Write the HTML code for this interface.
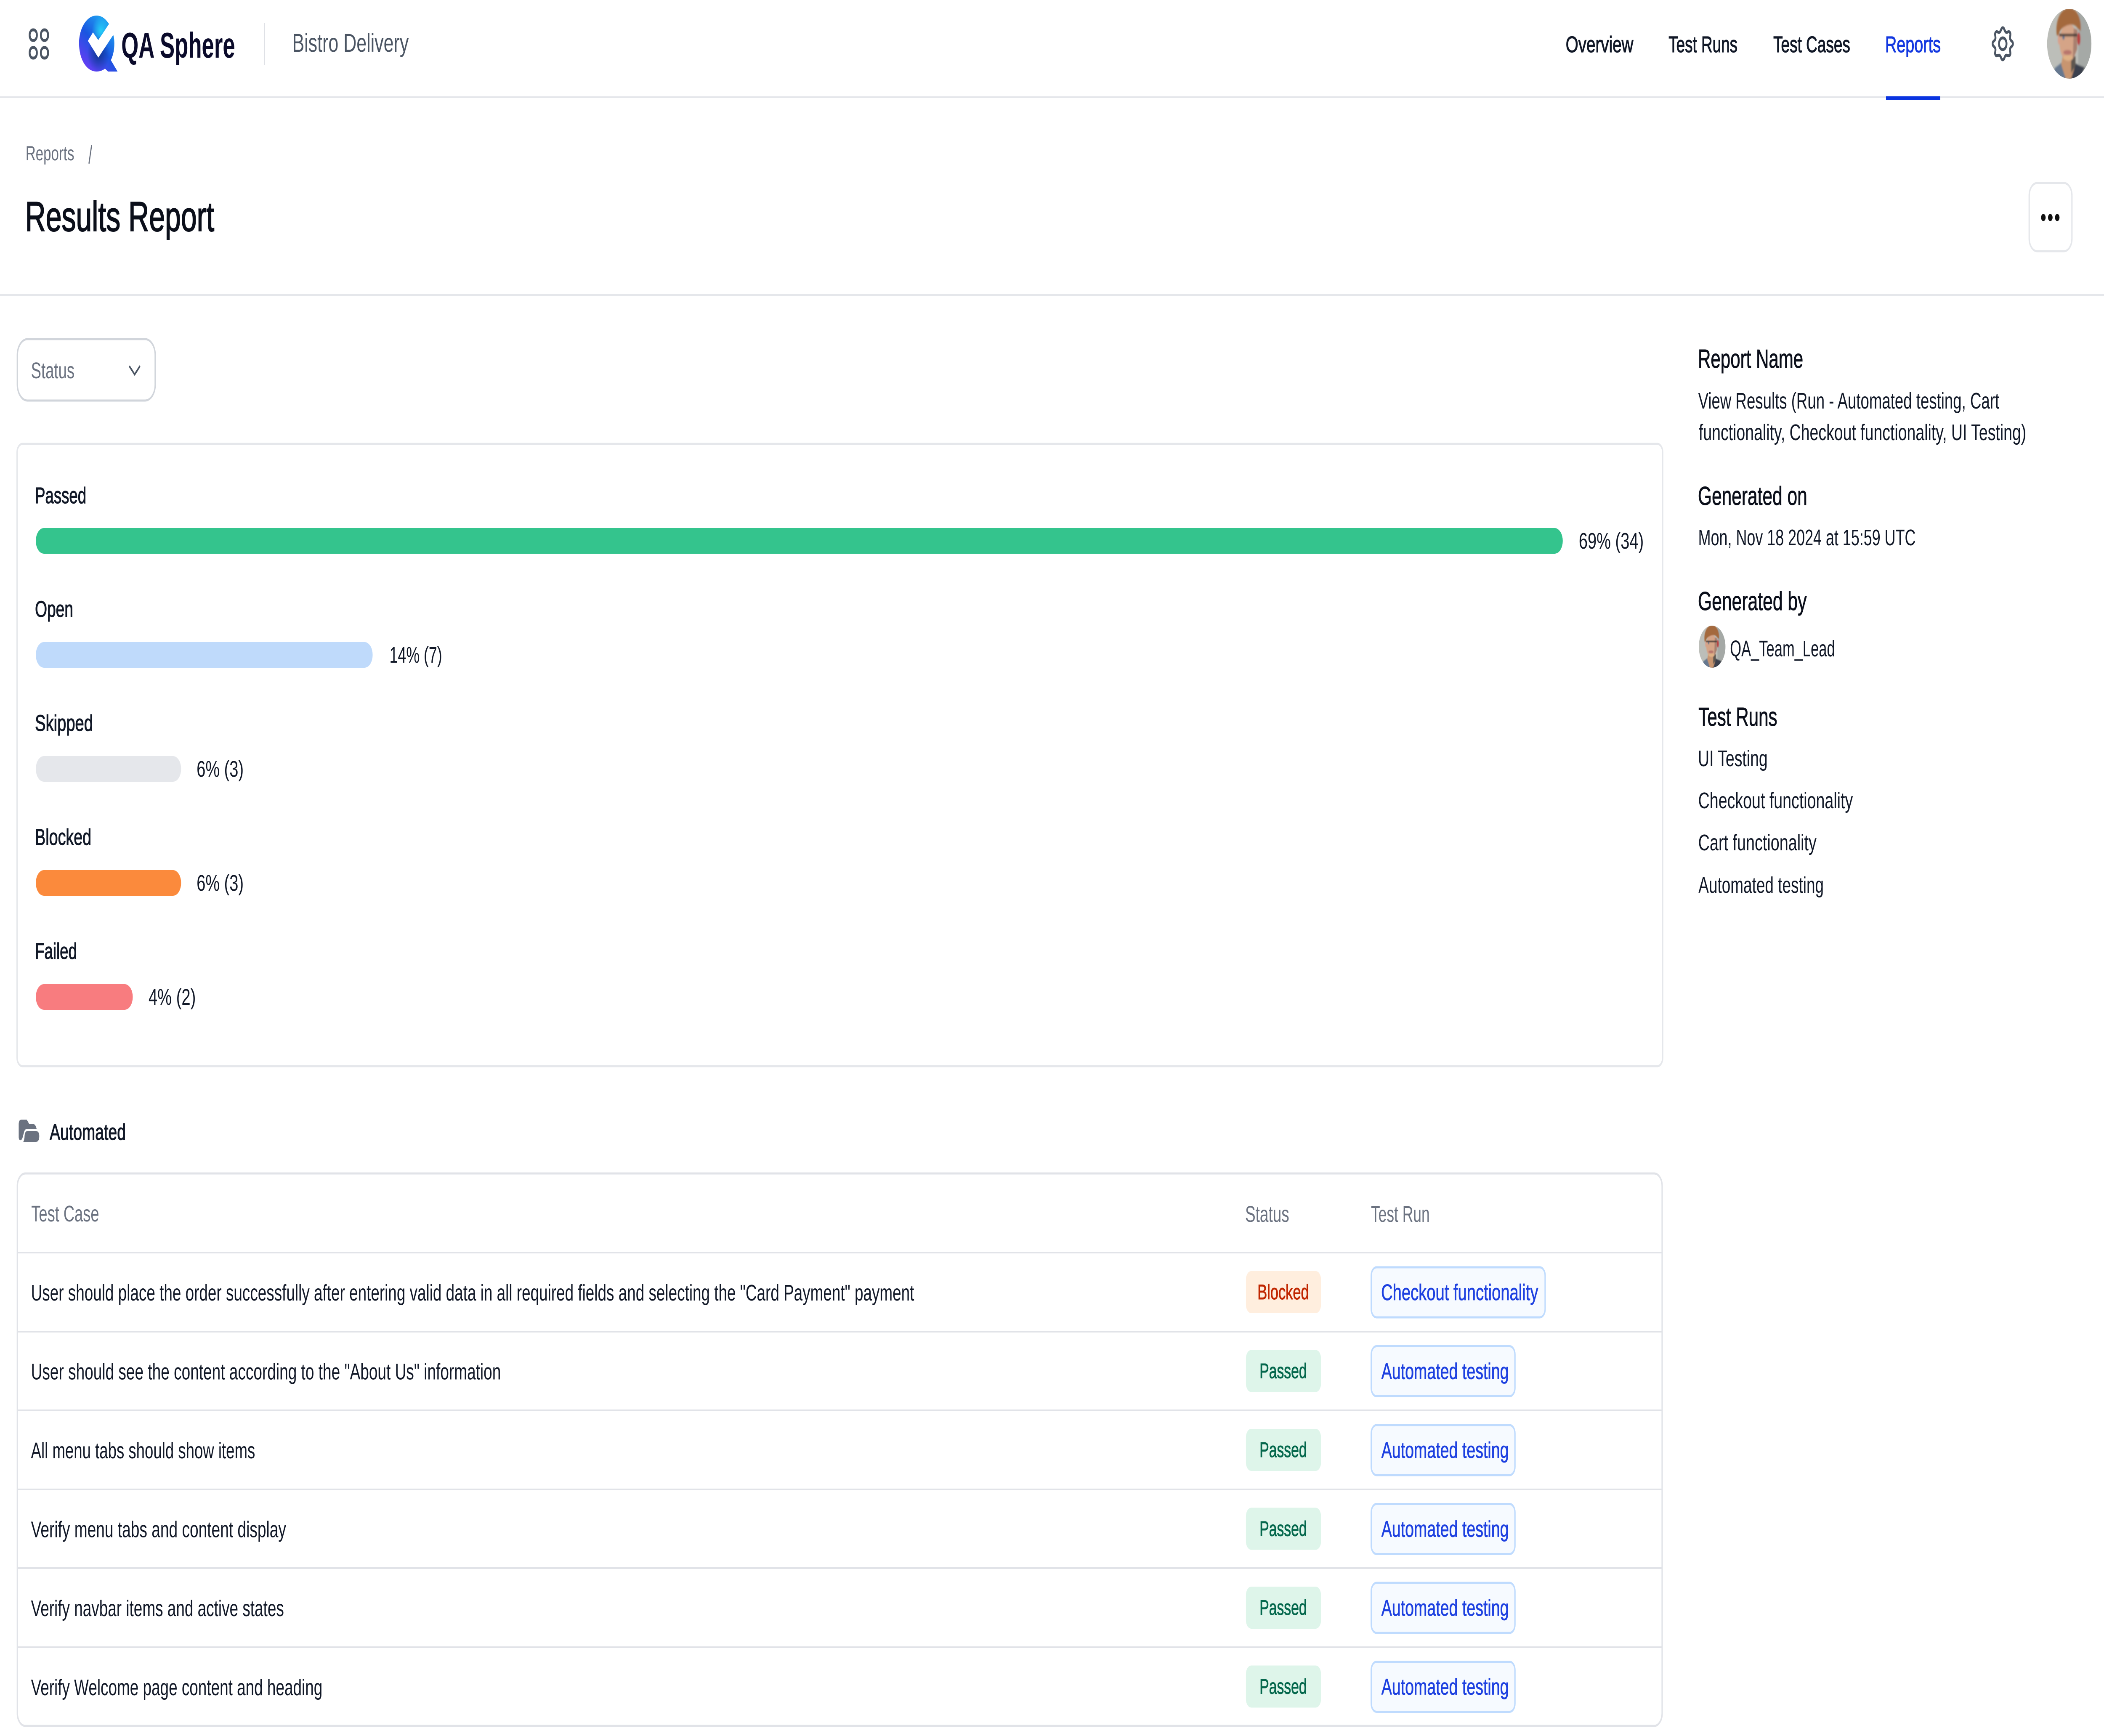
<!DOCTYPE html>
<html lang="en">
<head>
<meta charset="utf-8">
<title>Results Report</title>
<style>
html,body{margin:0;padding:0;background:#fff;width:100%;height:100%;overflow:hidden}
svg{display:block;position:fixed;left:0;top:0;width:100vw;height:100vh}
text{font-family:"Liberation Sans",sans-serif;fill:#111827;white-space:pre}
.m{stroke:#111827;stroke-width:1.2}
.b{font-size:54px}
.h{font-size:62px;fill:#0b0f1a;stroke:#0b0f1a;stroke-width:1}
.g{font-size:54px;fill:#6b7280}
.l{font-size:54px;fill:#1d40e0;stroke:#1d40e0;stroke-width:.8}
.p{font-size:50px;fill:#05684d;stroke:#05684d;stroke-width:1}
.bt{fill:#f6faff;stroke:#bfdbfe;stroke-width:5}
.pb{fill:#def5ea}
</style>
</head>
<body>
<svg xmlns="http://www.w3.org/2000/svg" viewBox="0 0 7876 4126" preserveAspectRatio="none">
<defs>
<linearGradient id="lg" gradientUnits="userSpaceOnUse" x1="395" y1="55" x2="320" y2="165">
<stop offset="0" stop-color="#1f9bf0"/><stop offset=".45" stop-color="#1a55e0"/><stop offset="1" stop-color="#6a3cf5"/>
</linearGradient>
<radialGradient id="rg" gradientUnits="userSpaceOnUse" cx="378" cy="73" r="34">
<stop offset="0" stop-color="#25d0f7"/><stop offset="1" stop-color="#25d0f7" stop-opacity="0"/>
</radialGradient>
<radialGradient id="rd" gradientUnits="userSpaceOnUse" cx="368" cy="128" r="42">
<stop offset="0" stop-color="#0a2f80" stop-opacity=".85"/><stop offset="1" stop-color="#0a2f80" stop-opacity="0"/>
</radialGradient>
<clipPath id="ac"><circle cx="0" cy="0" r="250"/></clipPath>
<filter id="bl" x="-10%" y="-10%" width="120%" height="120%"><feGaussianBlur stdDeviation="7"/></filter>
<g id="avatar">
<g clip-path="url(#ac)">
<rect x="-250" y="-250" width="500" height="500" fill="#bcbeb9"/>
<g filter="url(#bl)">
<rect x="100" y="-250" width="150" height="500" fill="#a5a9a6"/>
<path d="M-165 175 L-85 135 L-15 245 L-60 260 L-170 260Z" fill="#66788f"/>
<path d="M60 140 L175 170 L120 250 L0 260Z" fill="#3a3f4d"/>
<path d="M-75 90 H55 L70 150 L20 250 H-40 L-90 150Z" fill="#c89570"/>
<path d="M20 90 H70 L70 160 L20 210Z" fill="#5d5650"/>
<ellipse cx="-10" cy="-10" rx="100" ry="135" fill="#d5a487"/>
<path d="M50 -110 L92 -100 L88 40 L40 110Z" fill="#a88070"/>
<ellipse cx="108" cy="-35" rx="18" ry="46" fill="#b84040"/>
<ellipse cx="-116" cy="-30" rx="13" ry="36" fill="#d9a08c"/>
<path d="M-140 -60 C-160 -150 -110 -250 -5 -255 C90 -255 140 -180 130 -90 L95 -110 C60 -150 -10 -140 -60 -120 C-90 -110 -115 -90 -120 -60Z" fill="#a4693c"/>
<path d="M-112 -62 H90" stroke="#3d3532" stroke-width="18"/>
<circle cx="-65" cy="-42" r="13" fill="#5d7392"/>
<ellipse cx="-20" cy="62" rx="48" ry="17" fill="#b8746c"/>
<ellipse cx="-15" cy="100" rx="55" ry="18" fill="#dfb184"/>
</g>
</g>
</g>
</defs>

<rect width="7876" height="4126" fill="#fff"/>

<!-- top bar -->
<rect x="0" y="229" width="7876" height="4" fill="#e5e7eb"/>
<g fill="none" stroke="#4b5563" stroke-width="7">
<rect x="111" y="71" width="27" height="25" rx="12"/>
<rect x="153" y="71" width="27" height="25" rx="12"/>
<rect x="111" y="113" width="27" height="25" rx="12"/>
<rect x="153" y="113" width="27" height="25" rx="12"/>
</g>
<path id="q" d="M408 57 C393 42 377 37 361 37 C325 37 296 67 296 103 C296 142 325 170 361 170 C372 170 384 168 393 163 L404 170 H440 L415 143 C424 131 428 118 428 103 C428 96 427 90 424 83 L368 137 L329 97 L348 77 L368 95Z" fill="url(#lg)"/>
<path d="M408 57 C393 42 377 37 361 37 C325 37 296 67 296 103 C296 142 325 170 361 170 C372 170 384 168 393 163 L404 170 H440 L415 143 C424 131 428 118 428 103 C428 96 427 90 424 83 L368 137 L329 97 L348 77 L368 95Z" fill="url(#rg)"/>
<path d="M408 57 C393 42 377 37 361 37 C325 37 296 67 296 103 C296 142 325 170 361 170 C372 170 384 168 393 163 L404 170 H440 L415 143 C424 131 428 118 428 103 C428 96 427 90 424 83 L368 137 L329 97 L348 77 L368 95Z" fill="url(#rd)"/>
<text x="454" y="137" font-size="85" font-weight="700" textLength="426" lengthAdjust="spacingAndGlyphs" style="fill:#0b0b2b">QA Sphere</text>
<rect x="988" y="54" width="4" height="100" fill="#dfe1e6"/>
<text x="1094" y="123" font-size="61" textLength="436" lengthAdjust="spacingAndGlyphs" style="fill:#4b5563">Bistro Delivery</text>

<text class="m b" x="5861" y="124" textLength="253" lengthAdjust="spacingAndGlyphs">Overview</text>
<text class="m b" x="6246" y="124" textLength="258" lengthAdjust="spacingAndGlyphs">Test Runs</text>
<text class="m b" x="6638" y="124" textLength="288" lengthAdjust="spacingAndGlyphs">Test Cases</text>
<text class="b" x="7057" y="124" textLength="208" lengthAdjust="spacingAndGlyphs" style="fill:#1338e0;stroke:#1338e0;stroke-width:1.2">Reports</text>
<rect x="7060" y="229" width="203" height="8" fill="#0a34e0"/>

<g transform="translate(7497 104)" fill="none" stroke="#4b5563" stroke-width="7" stroke-linecap="round">
<circle r="14"/>
<path id="t" d="M27.7 -11.5 C30 -6 38 -6.5 38 0 C38 6.5 30 6 27.7 11.5"/>
<path transform="rotate(45)" d="M27.7 -11.5 C30 -6 38 -6.5 38 0 C38 6.5 30 6 27.7 11.5"/>
<path transform="rotate(90)" d="M27.7 -11.5 C30 -6 38 -6.5 38 0 C38 6.5 30 6 27.7 11.5"/>
<path transform="rotate(135)" d="M27.7 -11.5 C30 -6 38 -6.5 38 0 C38 6.5 30 6 27.7 11.5"/>
<path transform="rotate(180)" d="M27.7 -11.5 C30 -6 38 -6.5 38 0 C38 6.5 30 6 27.7 11.5"/>
<path transform="rotate(225)" d="M27.7 -11.5 C30 -6 38 -6.5 38 0 C38 6.5 30 6 27.7 11.5"/>
<path transform="rotate(270)" d="M27.7 -11.5 C30 -6 38 -6.5 38 0 C38 6.5 30 6 27.7 11.5"/>
<path transform="rotate(315)" d="M27.7 -11.5 C30 -6 38 -6.5 38 0 C38 6.5 30 6 27.7 11.5"/>
</g>
<use href="#avatar" transform="translate(7746 104) scale(.332)"/>

<!-- page header -->
<text x="96" y="381" font-size="48" textLength="182" lengthAdjust="spacingAndGlyphs" style="fill:#6b7280">Reports</text>
<path d="M343 345 L333 389" stroke="#6b7280" stroke-width="4" fill="none"/>
<text x="94" y="549" font-size="99" textLength="708" lengthAdjust="spacingAndGlyphs" style="fill:#0b0f1a;stroke:#0b0f1a;stroke-width:2">Results Report</text>
<rect x="7596" y="435" width="160" height="162" rx="30" fill="#fff" stroke="#e5e7eb" stroke-width="5"/>
<circle cx="7649" cy="517" r="8.5" fill="#111"/><circle cx="7675" cy="517" r="8.5" fill="#111"/><circle cx="7701" cy="517" r="8.5" fill="#111"/>
<rect x="0" y="699" width="7876" height="4" fill="#e5e7eb"/>

<!-- status filter -->
<rect x="65" y="806" width="516" height="146" rx="38" fill="#fff" stroke="#d1d5db" stroke-width="5"/>
<text class="g" x="116" y="899" textLength="163" lengthAdjust="spacingAndGlyphs">Status</text>
<path d="M484 870 L504 890 L524 870" fill="none" stroke="#4b5563" stroke-width="5"/>

<!-- chart card -->
<rect x="64" y="1055" width="6160" height="1479" rx="20" fill="#fff" stroke="#e5e7eb" stroke-width="5"/>
<text class="m b" x="131" y="1196" textLength="192" lengthAdjust="spacingAndGlyphs">Passed</text>
<rect x="134" y="1255" width="5716" height="61" rx="30.5" fill="#34c48d"/>
<text class="b" x="5910" y="1304" textLength="243" lengthAdjust="spacingAndGlyphs">69% (34)</text>

<text class="m b" x="131" y="1466" textLength="143" lengthAdjust="spacingAndGlyphs">Open</text>
<rect x="134" y="1526" width="1261" height="61" rx="30.5" fill="#bfdafb"/>
<text class="b" x="1458" y="1575" textLength="197" lengthAdjust="spacingAndGlyphs">14% (7)</text>

<text class="m b" x="131" y="1737" textLength="217" lengthAdjust="spacingAndGlyphs">Skipped</text>
<rect x="134" y="1797" width="544" height="61" rx="30.5" fill="#e5e7eb"/>
<text class="b" x="736" y="1846" textLength="176" lengthAdjust="spacingAndGlyphs">6% (3)</text>

<text class="m b" x="131" y="2008" textLength="211" lengthAdjust="spacingAndGlyphs">Blocked</text>
<rect x="134" y="2068" width="544" height="61" rx="30.5" fill="#fb8a3c"/>
<text class="b" x="736" y="2117" textLength="176" lengthAdjust="spacingAndGlyphs">6% (3)</text>

<text class="m b" x="131" y="2279" textLength="157" lengthAdjust="spacingAndGlyphs">Failed</text>
<rect x="134" y="2339" width="363" height="61" rx="30.5" fill="#f87c7f"/>
<text class="b" x="556" y="2388" textLength="177" lengthAdjust="spacingAndGlyphs">4% (2)</text>

<!-- folder -->
<path d="M81 2661 H100 L109 2671 H122 Q133 2671 137 2683 H102 Q92 2683 89 2693 L84 2705 Q80 2711 75 2710 Q70 2708 70 2703 V2672 Q70 2661 81 2661Z" fill="#6b7280"/>
<path d="M104 2688 H133 Q147 2688 147 2700 Q147 2714 134 2714 H87 Q92 2708 92 2700 Q93 2688 104 2688Z" fill="#6b7280"/>
<text class="m b" x="186" y="2709" textLength="285" lengthAdjust="spacingAndGlyphs">Automated</text>

<!-- table -->
<rect x="65" y="2789" width="6157" height="1313" rx="30" fill="#fff" stroke="#e1e3e8" stroke-width="5"/>
<g fill="#e1e3e8">
<rect x="65" y="2975" width="6157" height="4"/>
<rect x="65" y="3163" width="6157" height="4"/>
<rect x="65" y="3350" width="6157" height="4"/>
<rect x="65" y="3538" width="6157" height="4"/>
<rect x="65" y="3725" width="6157" height="4"/>
<rect x="65" y="3913" width="6157" height="4"/>
</g>
<text class="g" x="117" y="2903" textLength="254" lengthAdjust="spacingAndGlyphs">Test Case</text>
<text class="g" x="4661" y="2904" textLength="165" lengthAdjust="spacingAndGlyphs">Status</text>
<text class="g" x="5132" y="2904" textLength="220" lengthAdjust="spacingAndGlyphs">Test Run</text>

<text class="b" x="116" y="3091" textLength="3306" lengthAdjust="spacingAndGlyphs">User should place the order successfully after entering valid data in all required fields and selecting the "Card Payment" payment</text>
<text class="b" x="116" y="3278.5" textLength="1759" lengthAdjust="spacingAndGlyphs">User should see the content according to the "About Us" information</text>
<text class="b" x="116" y="3466" textLength="839" lengthAdjust="spacingAndGlyphs">All menu tabs should show items</text>
<text class="b" x="116" y="3653.5" textLength="955" lengthAdjust="spacingAndGlyphs">Verify menu tabs and content display</text>
<text class="b" x="116" y="3841" textLength="947" lengthAdjust="spacingAndGlyphs">Verify navbar items and active states</text>
<text class="b" x="116" y="4029" textLength="1091" lengthAdjust="spacingAndGlyphs">Verify Welcome page content and heading</text>

<rect x="4664" y="3021" width="281" height="100" rx="20" fill="#ffeede"/>
<text x="4707" y="3088" font-size="50" textLength="193" lengthAdjust="spacingAndGlyphs" style="fill:#c02600;stroke:#c02600;stroke-width:1">Blocked</text>
<rect class="pb" x="4664" y="3208.5" width="281" height="100" rx="20"/>
<text class="p" x="4715" y="3275.5" textLength="177" lengthAdjust="spacingAndGlyphs">Passed</text>
<rect class="pb" x="4664" y="3396" width="281" height="100" rx="20"/>
<text class="p" x="4715" y="3463" textLength="177" lengthAdjust="spacingAndGlyphs">Passed</text>
<rect class="pb" x="4664" y="3583.5" width="281" height="100" rx="20"/>
<text class="p" x="4715" y="3650.5" textLength="177" lengthAdjust="spacingAndGlyphs">Passed</text>
<rect class="pb" x="4664" y="3771" width="281" height="100" rx="20"/>
<text class="p" x="4715" y="3838" textLength="177" lengthAdjust="spacingAndGlyphs">Passed</text>
<rect class="pb" x="4664" y="3958.5" width="281" height="100" rx="20"/>
<text class="p" x="4715" y="4025.5" textLength="177" lengthAdjust="spacingAndGlyphs">Passed</text>

<rect class="bt" x="5133" y="3012" width="651" height="119" rx="20"/>
<text class="l" x="5170" y="3090" textLength="588" lengthAdjust="spacingAndGlyphs">Checkout functionality</text>
<rect class="bt" x="5133" y="3199.5" width="538" height="119" rx="20"/>
<text class="l" x="5171" y="3277.5" textLength="477" lengthAdjust="spacingAndGlyphs">Automated testing</text>
<rect class="bt" x="5133" y="3387" width="538" height="119" rx="20"/>
<text class="l" x="5171" y="3465" textLength="477" lengthAdjust="spacingAndGlyphs">Automated testing</text>
<rect class="bt" x="5133" y="3574.5" width="538" height="119" rx="20"/>
<text class="l" x="5171" y="3652.5" textLength="477" lengthAdjust="spacingAndGlyphs">Automated testing</text>
<rect class="bt" x="5133" y="3762" width="538" height="119" rx="20"/>
<text class="l" x="5171" y="3840" textLength="477" lengthAdjust="spacingAndGlyphs">Automated testing</text>
<rect class="bt" x="5133" y="3949.5" width="538" height="119" rx="20"/>
<text class="l" x="5171" y="4027.5" textLength="477" lengthAdjust="spacingAndGlyphs">Automated testing</text>

<!-- sidebar -->
<text class="h" x="6356" y="874" textLength="394" lengthAdjust="spacingAndGlyphs">Report Name</text>
<text class="b" x="6357" y="971" textLength="1127" lengthAdjust="spacingAndGlyphs">View Results (Run - Automated testing, Cart</text>
<text class="b" x="6359" y="1046" textLength="1226" lengthAdjust="spacingAndGlyphs">functionality, Checkout functionality, UI Testing)</text>
<text class="h" x="6356" y="1200" textLength="409" lengthAdjust="spacingAndGlyphs">Generated on</text>
<text class="b" x="6357" y="1296" textLength="814" lengthAdjust="spacingAndGlyphs">Mon, Nov 18 2024 at 15:59 UTC</text>
<text class="h" x="6356" y="1450" textLength="407" lengthAdjust="spacingAndGlyphs">Generated by</text>
<use href="#avatar" transform="translate(6409 1537) scale(.2)"/>
<text class="b" x="6476" y="1560" textLength="393" lengthAdjust="spacingAndGlyphs">QA_Team_Lead</text>
<text class="h" x="6358" y="1725" textLength="295" lengthAdjust="spacingAndGlyphs">Test Runs</text>
<text class="b" x="6356" y="1821" textLength="261" lengthAdjust="spacingAndGlyphs">UI Testing</text>
<text class="b" x="6357" y="1921" textLength="579" lengthAdjust="spacingAndGlyphs">Checkout functionality</text>
<text class="b" x="6357" y="2021" textLength="443" lengthAdjust="spacingAndGlyphs">Cart functionality</text>
<text class="b" x="6358" y="2122" textLength="469" lengthAdjust="spacingAndGlyphs">Automated testing</text>
</svg>
</body>
</html>
